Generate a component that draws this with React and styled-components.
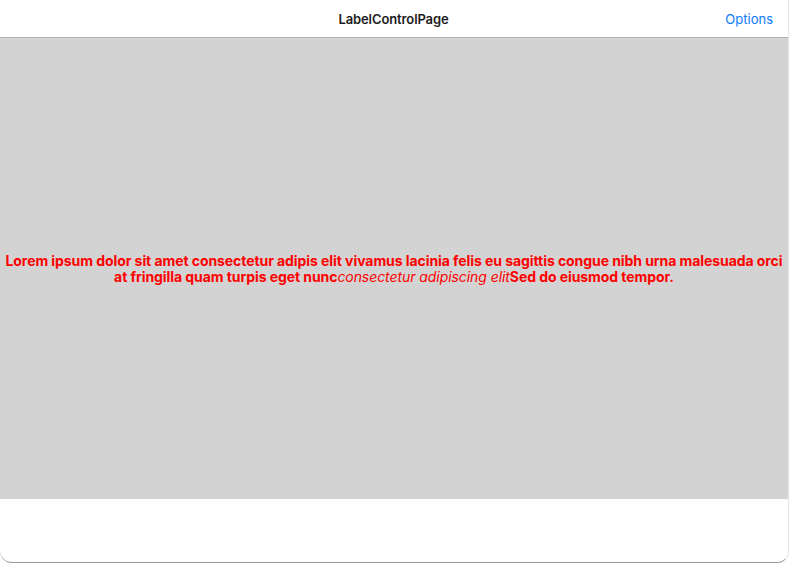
import React from "react";
import styled, { createGlobalStyle } from "styled-components";

const Global = createGlobalStyle`
  html, body { margin: 0; padding: 0; background: #fff; }
  body { font-family: Inter, "Noto Sans", sans-serif; }
`;

const Screen = styled.div`
  width: 789px;
  height: 563px;
  display: flex;
  flex-direction: column;
  background: #fff;
  box-sizing: border-box;
  border-radius: 0 0 12px 12px;
  border-bottom: 1px solid #9a9a9a;
  border-right: 1px solid #e4e4e4;
  overflow: hidden;
`;

const NavBar = styled.header`
  height: 37px;
  flex: none;
  display: grid;
  grid-template-columns: 1fr auto 1fr;
  align-items: center;
  border-bottom: 1px solid #b2b2b2;
  padding: 0 15px 0 14px;
`;

const Title = styled.div`
  grid-column: 2;
  font-size: 13px;
  font-weight: 600;
  color: #1c1c1c;
  letter-spacing: -0.1px;
`;

const NavButton = styled.div`
  grid-column: 3;
  justify-self: end;
  font-size: 13px;
  color: #0a7aff;
`;

const Content = styled.main`
  height: 461px;
  flex: none;
  background: #d3d3d3;
  display: flex;
  align-items: center;
  justify-content: center;
  padding: 0 1px;
`;

const Label = styled.p`
  margin: 0;
  text-align: center;
  color: #ff0000;
  font-size: 14px;
  line-height: 16px;
  font-weight: 700;
  letter-spacing: -0.07px;
`;

const Span = styled.span`
  font-style: ${(p) => (p.$italic ? "italic" : "normal")};
  font-weight: ${(p) => (p.$italic ? 400 : 700)};
`;

const Footer = styled.div`
  flex: 1;
`;

export default function App() {
  return (
    <>
      <Global />
      <Screen>
        <NavBar>
          <Title>LabelControlPage</Title>
          <NavButton>Options</NavButton>
        </NavBar>
        <Content>
          <Label>
            <Span>
              Lorem ipsum dolor sit amet consectetur adipis elit vivamus lacinia felis eu sagittis congue nibh urna malesuada orci at fringilla quam turpis eget nunc
            </Span>
            <Span $italic>consectetur adipiscing elit</Span>
            <Span>Sed do eiusmod tempor.</Span>
          </Label>
        </Content>
        <Footer />
      </Screen>
    </>
  );
}
